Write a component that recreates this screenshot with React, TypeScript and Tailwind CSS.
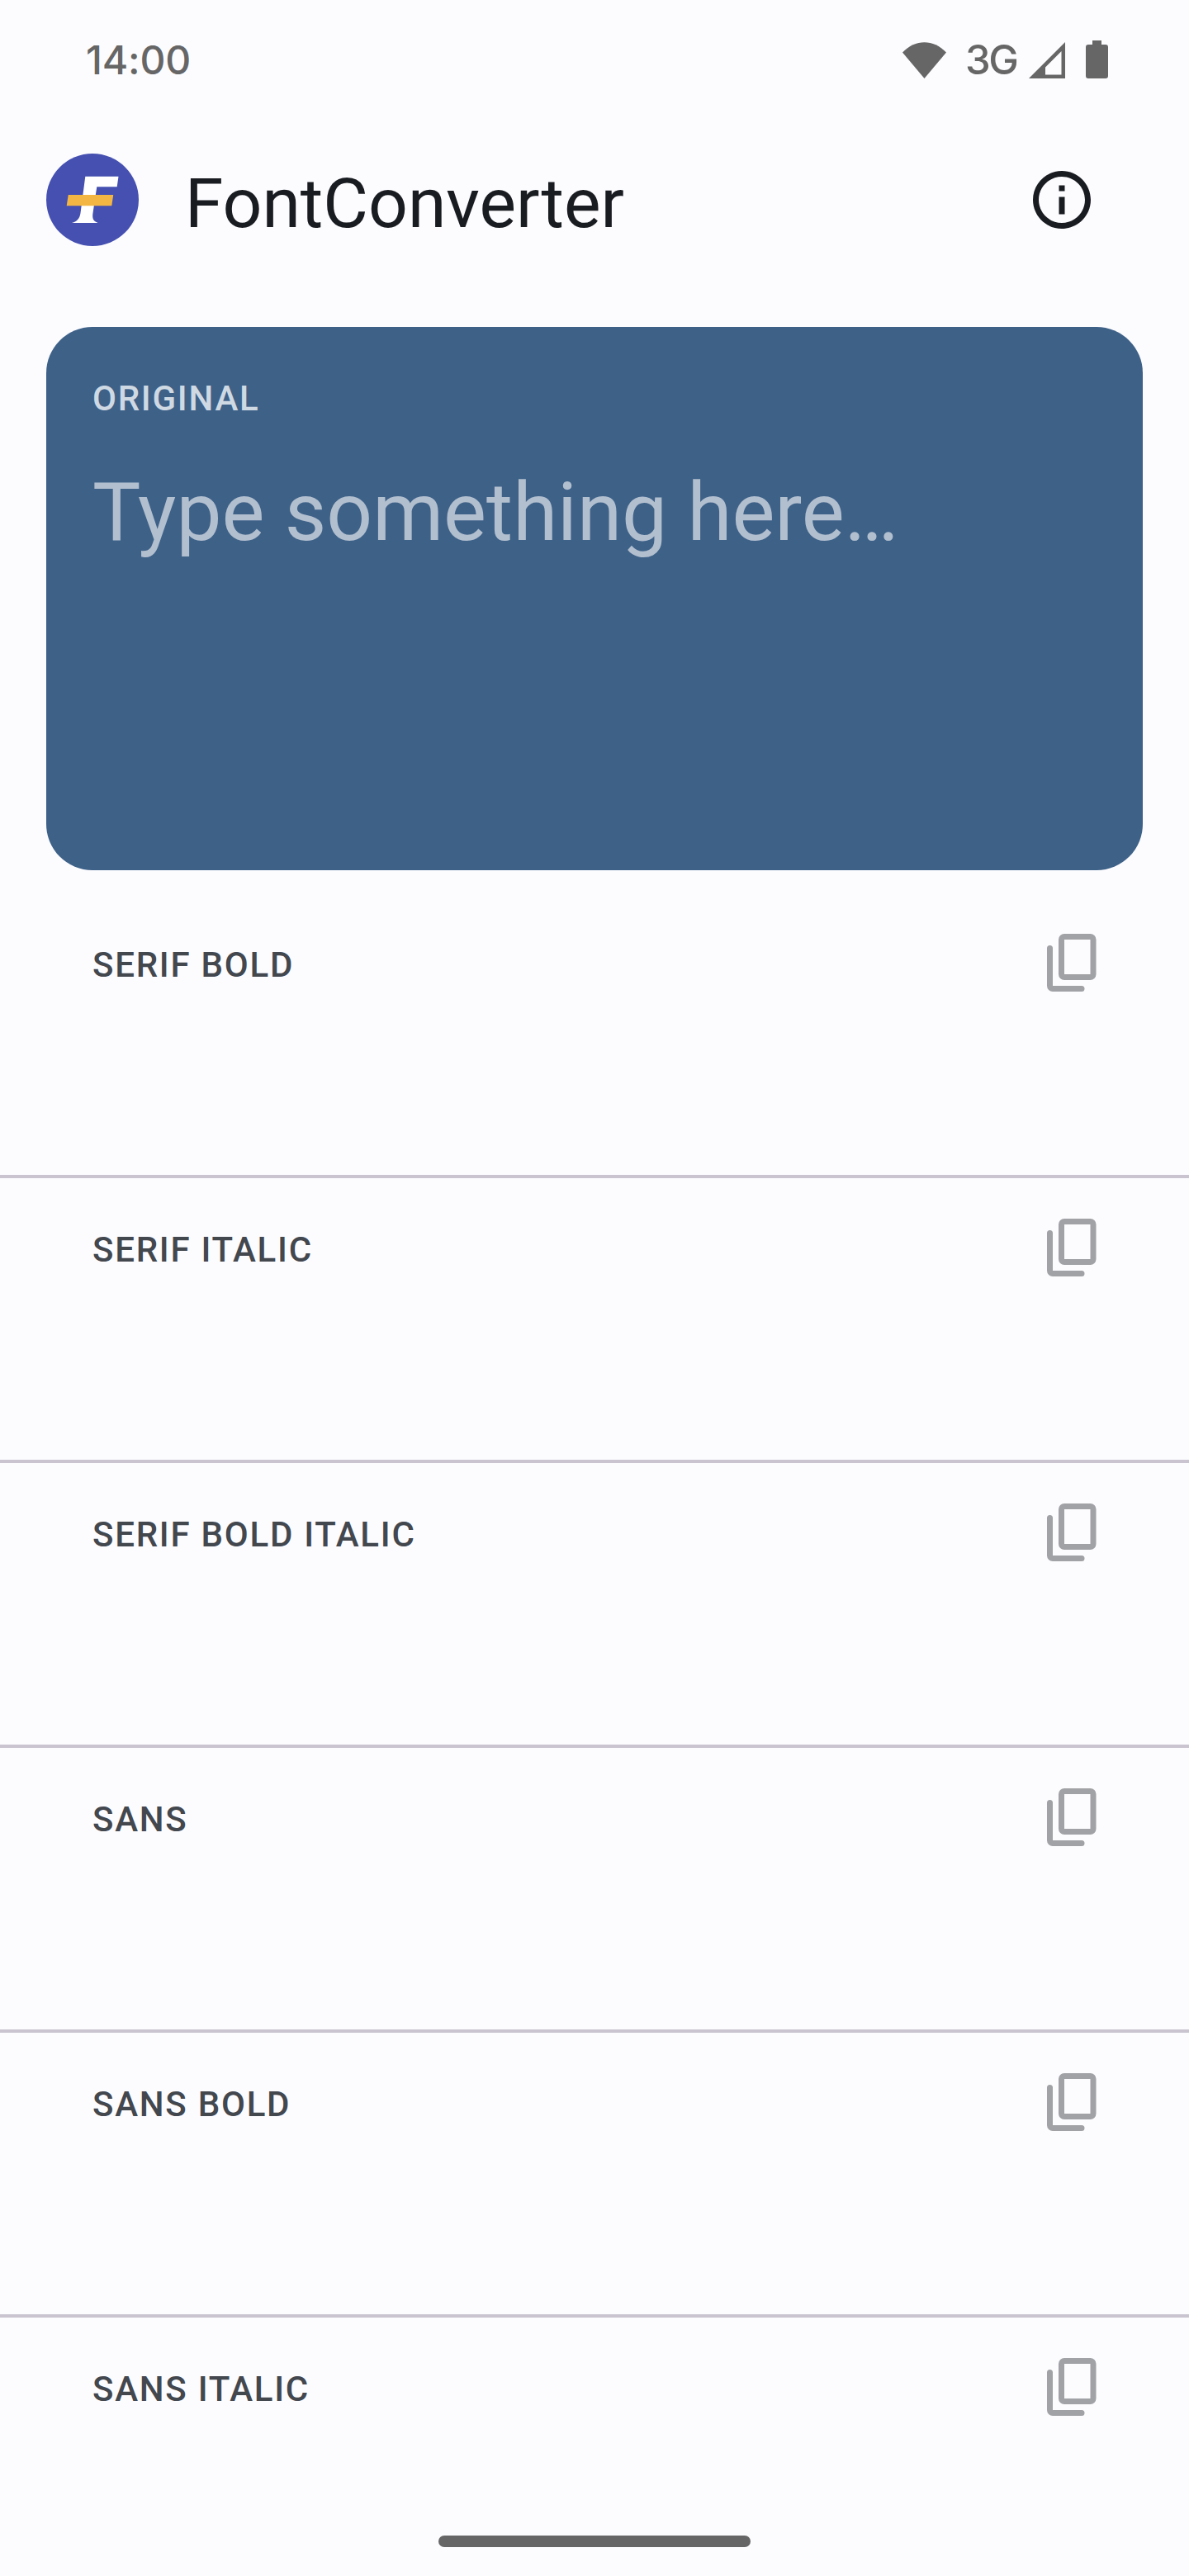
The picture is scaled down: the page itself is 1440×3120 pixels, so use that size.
const STYLES = ['SERIF BOLD', 'SERIF ITALIC', 'SERIF BOLD ITALIC', 'SANS', 'SANS BOLD', 'SANS ITALIC'];

function StatusBar() {
  return (
    <header className="flex h-[140px] shrink-0 items-center pt-[5px] pl-[104px] text-[#666666]">
      <span className="font-[Inter] text-[48px] leading-[60px] font-medium tracking-[-0.2px]">14:00</span>
      <div className="ml-auto flex items-center pr-[98px]">
        <svg width="53" height="44" viewBox="0 0 53 44" fill="currentColor">
          <path d="M26.500 44 0 12.500C15.500 -4 37.500 -4 53 12.500z" />
        </svg>
        <span className="ml-[23px] w-[65px] font-[Inter] text-[49px] leading-[60px] font-medium tracking-[-2.5px]">3G</span>
        <svg className="ml-[12px]" width="44" height="44" viewBox="0 0 44 44" fill="currentColor">
          <path fillRule="evenodd" d="M0 44 44 0V44zM20 39.500H39.500V11L20 30.500z" />
        </svg>
        <svg className="-mt-[2px] ml-[25px]" width="27" height="46" viewBox="0 0 27 46" fill="currentColor">
          <path d="M8 0H19V5H24Q27 5 27 8V43Q27 46 24 46H3Q0 46 0 43V8Q0 5 3 5H8z" />
        </svg>
      </div>
    </header>
  );
}

function Logo() {
  return (
    <svg width="112" height="112" viewBox="0 0 112 112">
      <circle cx="56" cy="56" r="56" fill="#4550b0" />
      <path fill="#fff" d="M47.300 27.700H87.500L85.700 40.300H61.300L56.500 72C55.500 79 57 82 62.700 84H31C38 82 40.500 78 41.500 72z" />
      <path fill="#f4b642" d="M26.700 50H81.200L79.300 63.200H24.700z" />
    </svg>
  );
}

function CopyIcon() {
  return (
    <svg width="84" height="84" viewBox="0 0 24 24" fill="none" stroke="#a1a2a5" strokeWidth="2">
      <rect x="9" y="3" width="11" height="14" rx="1" strokeLinejoin="round" />
      <path d="M5 7v13a1 1 0 0 0 1 1h10" strokeLinecap="round" />
    </svg>
  );
}

export default function App() {
  return (
    <div className="flex h-[3120px] w-[1440px] flex-col overflow-hidden bg-[#fcfcff] font-[Roboto]">
      <StatusBar />
      <div className="flex h-[256px] shrink-0 items-start px-[56px] pt-[46px]">
        <Logo />
        <h1 className="ml-[56px] pt-[12px] text-[84px] leading-[98px] text-[#191c20]">FontConverter</h1>
        <svg className="mt-[14px] mr-[56px] ml-auto" width="84" height="84" viewBox="0 0 24 24" fill="#191c20">
          <path d="M11 7h2v2h-2zm0 4h2v6h-2zm1-9C6.480 2 2 6.480 2 12s4.480 10 10 10 10-4.480 10-10S17.520 2 12 2zm0 18c-4.410 0-8-3.590-8-8s3.590-8 8-8 8 3.590 8 8-3.590 8-8 8z" />
        </svg>
      </div>
      <section className="mx-[56px] h-[658px] shrink-0 rounded-[56px] bg-[#3e6188] px-[56px] pt-[59px]">
        <h2 className="text-[42px] leading-[56px] font-medium tracking-[1.75px] text-[#cfd9e3]">ORIGINAL</h2>
        <p className="mt-[47px] text-[98px] leading-[126px] text-[#b2bfcf]">Type something here…</p>
      </section>
      <main className="mt-[28px] flex-1 overflow-hidden">
        {STYLES.map((name) => (
          <div key={name} className="flex h-[345px] items-start justify-between border-b-4 border-[#cac4d0] pr-[102px] pl-[112px] last:border-transparent">
            <h2 className="mt-[59px] text-[42px] leading-[56px] font-medium tracking-[1.75px] text-[#43474e]">{name}</h2>
            <button className="mt-[42px]" aria-label="Copy">
              <CopyIcon />
            </button>
          </div>
        ))}
      </main>
      <div className="mx-auto mt-auto mb-[35px] h-[14px] w-[378px] shrink-0 rounded-full bg-[#666666]" />
    </div>
  );
}
